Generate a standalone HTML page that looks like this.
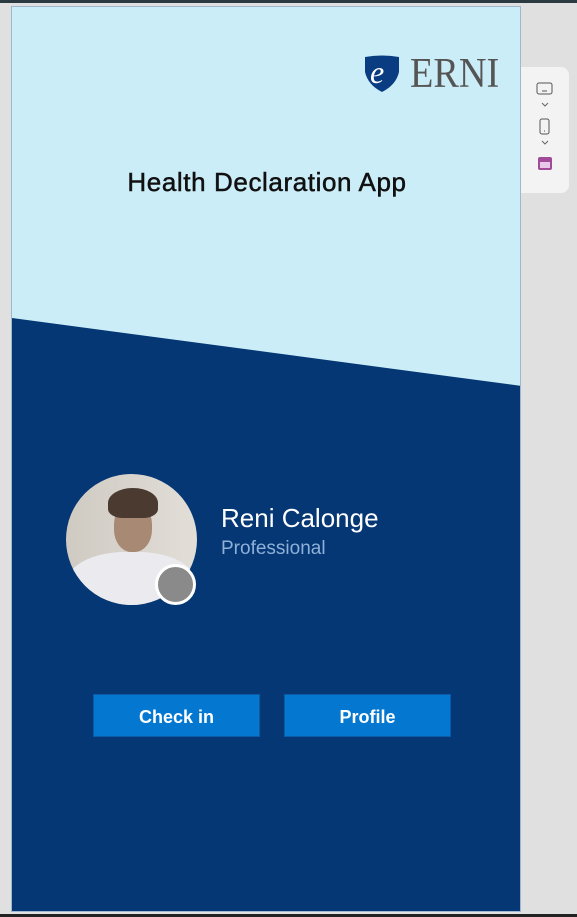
<!DOCTYPE html>
<html><head><style>
html,body{margin:0;padding:0;width:577px;height:917px;background:#e0e0e0;overflow:hidden;font-family:"Liberation Sans",sans-serif;position:relative}
.topbar{position:absolute;left:0;top:0;width:577px;height:3px;background:#2a3a40}
.bot{position:absolute;left:0;top:914px;width:577px;height:3px;background:#222}
.canvas{position:absolute;left:11px;top:6px;width:510px;height:906px;background:#cbedf7;border:1px solid #9fb8d0;box-sizing:border-box;overflow:hidden}
.dark{position:absolute;left:0;top:0;width:510px;height:906px;background:#043774;clip-path:polygon(0 311px,510px 379px,510px 906px,0 906px)}
h1{position:absolute;left:0;width:510px;top:160px;margin:0;text-align:center;font-weight:normal;font-size:26px;letter-spacing:0.6px;color:#111;-webkit-text-stroke:0.5px #111}
.logo{position:absolute;left:352px;top:48px}
.erni{position:absolute;left:398px;top:44px;font-family:"Liberation Serif",serif;font-size:42px;color:#555;line-height:46px;transform:scaleX(0.91);transform-origin:left}
.av{position:absolute;left:54px;top:467px;width:131px;height:131px;border-radius:50%;background:linear-gradient(90deg,#cfcac2,#e2ded8);overflow:hidden}
.face{position:absolute;left:48px;top:28px;width:38px;height:50px;border-radius:45%;background:#a88a74}
.hair{position:absolute;left:42px;top:14px;width:50px;height:30px;border-radius:50% 50% 30% 30%;background:#4a3a30}
.shirt{position:absolute;left:0px;top:78px;width:131px;height:70px;border-radius:45% 45% 0 0;background:#ebebef}
.st{position:absolute;left:143px;top:557px;width:35px;height:35px;border-radius:50%;background:#8a8a8a;border:3px solid #fff}
.name{position:absolute;left:209px;top:496px;color:#fff;font-size:26px}
.role{position:absolute;left:209px;top:531px;color:#8fb0d8;font-size:19px}
.btn{position:absolute;top:687px;width:167px;height:43px;background:#0478d0;border:1px solid #0a5aa8;box-sizing:border-box;color:#fff;font-weight:bold;font-size:18px;text-align:center;line-height:45px}
.panel{position:absolute;left:521px;top:67px;width:48px;height:126px;background:#f3f3f3;border-radius:0 8px 8px 0}
</style></head><body>
<div class="topbar"></div>
<div class="canvas">
 <div class="dark"></div>
 <svg class="logo" width="36" height="38" viewBox="0 0 36 38"><path d="M1 2 Q18 -1 35 2 L35 17 Q32 30 18 37 Q4 30 1 17 Z" fill="#0a3c82"/><text x="6" y="28" font-family="Liberation Serif" font-style="italic" font-size="32" fill="#fff">e</text></svg>
 <div class="erni">ERNI</div>
 <h1>Health Declaration App</h1>
 <div class="av"><div class="shirt"></div><div class="face"></div><div class="hair"></div></div>
 <div class="st"></div>
 <div class="name">Reni Calonge</div>
 <div class="role">Professional</div>
 <div class="btn" style="left:81px">Check in</div>
 <div class="btn" style="left:272px">Profile</div>
</div>
<div class="panel">
 <svg width="48" height="126" viewBox="0 0 48 126"><rect x="16" y="16" width="15" height="11" rx="2" fill="none" stroke="#555" stroke-width="1"/><line x1="21" y1="24" x2="26" y2="24" stroke="#555"/><path d="M21 36 l3 3 l3 -3" fill="none" stroke="#666"/><rect x="19" y="52" width="9" height="15" rx="2" fill="none" stroke="#555"/><line x1="23" y1="64" x2="24" y2="64" stroke="#555"/><path d="M21 74 l3 3 l3 -3" fill="none" stroke="#666"/><rect x="17" y="90" width="14" height="13" rx="2" fill="#a04a98"/><rect x="19" y="95" width="10" height="6" fill="#e8c8e8"/></svg>
</div>
<div class="bot"></div>
</body></html>
